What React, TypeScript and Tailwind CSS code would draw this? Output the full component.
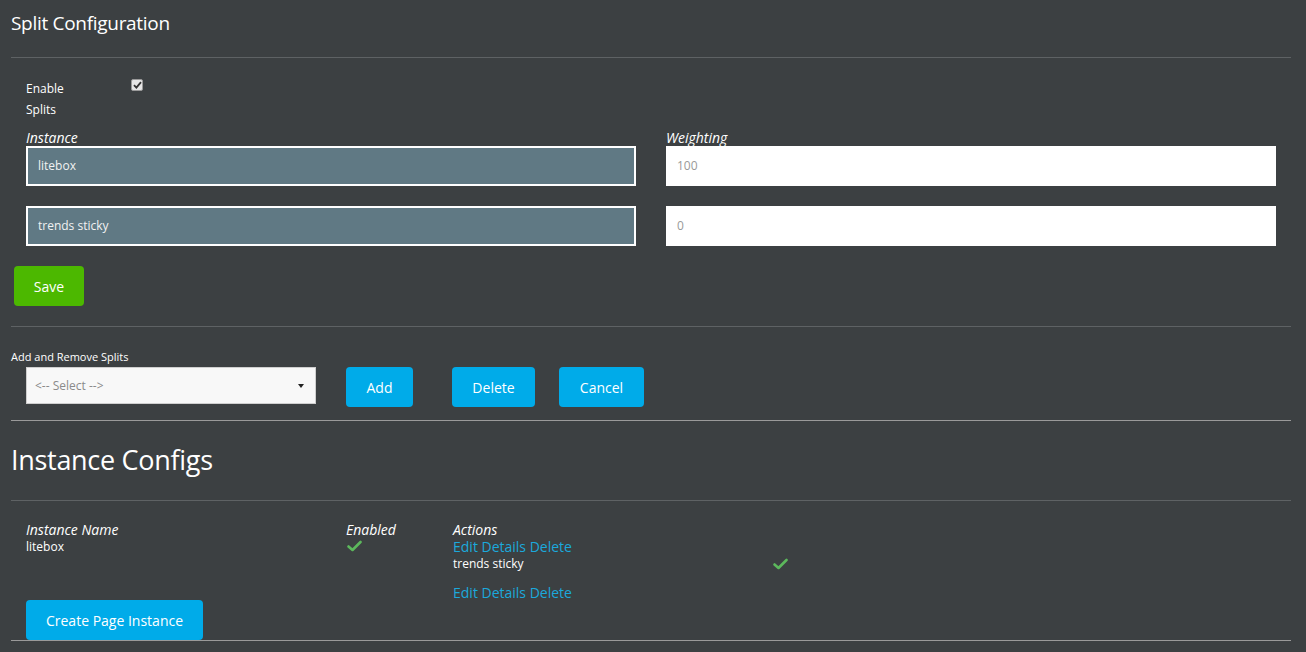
import React from "react";

const font = { fontFamily: '"Open Sans", "Noto Sans", sans-serif' };

function Check({ className = "" }: { className?: string }) {
  return (
    <svg width="15" height="12" viewBox="0 0 15 12" className={className}>
      <path d="M1.5 6.5 L5.5 10 L13.5 2" fill="none" stroke="#5cb85c" strokeWidth="2.6" strokeLinecap="round" strokeLinejoin="round" />
    </svg>
  );
}

export default function App() {
  return (
    <div className="w-[1306px] h-[652px] overflow-hidden bg-[#3c4042] text-white pl-[11px] pr-[15px]" style={font}>
      {/* Title */}
      <div className="h-[58px] border-b border-[#5e6264] pt-[10px]">
        <h1 className="text-[19px] leading-[26px] tracking-[-0.3px]">Split Configuration</h1>
      </div>

      {/* Enable */}
      <div className="flex pl-[15px] pt-[20px]">
        <div className="w-[105px] text-[12px] leading-[21px]">
          Enable
          <br />
          Splits
        </div>
        <div className="pt-[1px]">
          <span className="flex h-[12px] w-[12px] items-center justify-center rounded-[2px] bg-[#e6e6e6] border border-[#9a9a9a]">
            <svg width="9" height="8" viewBox="0 0 9 8">
              <path d="M1 4.2 L3.4 6.6 L8 1.2" fill="none" stroke="#333" strokeWidth="1.8" />
            </svg>
          </span>
        </div>
      </div>

      {/* Instance / Weighting */}
      <div className="grid grid-cols-[610px_610px] gap-x-[30px] gap-y-[20px] pl-[15px] pt-[10px]">
        <div>
          <div className="text-[14px] italic leading-[16px]">Instance</div>
          <div className="h-[40px] border-2 border-white bg-[#607984] px-[10px] text-[12px] leading-[36px] text-[#f2f2f2]">litebox</div>
        </div>
        <div>
          <div className="text-[14px] italic leading-[16px]">Weighting</div>
          <div className="h-[40px] bg-white px-[11px] text-[12px] leading-[40px] text-[#999]">100</div>
        </div>
        <div className="h-[40px] border-2 border-white bg-[#607984] px-[10px] text-[12px] leading-[36px] text-[#f2f2f2]">trends sticky</div>
        <div className="h-[40px] bg-white px-[11px] text-[12px] leading-[40px] text-[#999]">0</div>
      </div>

      {/* Save */}
      <div className="h-[81px] border-b border-[#5e6264] pl-[3px] pt-[20px]">
        <button className="h-[40px] w-[70px] rounded-[4px] bg-[#4cb800] text-[14px] text-white">Save</button>
      </div>

      {/* Add and Remove */}
      <div className="h-[94px] border-b border-[#9a9a9a]">
        <div className="pt-[23px] text-[11px] leading-[14px]">Add and Remove Splits</div>
        <div className="flex items-start pl-[15px] pt-[3px]">
          <div className="flex h-[37px] w-[290px] items-center justify-between border border-[#cfcfcf] bg-[#f8f8f8] pl-[8px] pr-[11px] text-[12px] text-[#8a8a8a]">
            <span>&lt;-- Select --&gt;</span>
            <svg width="6" height="4" viewBox="0 0 6 4">
              <path d="M0 0 H6 L3 4 Z" fill="#222" />
            </svg>
          </div>
          <button className="ml-[30px] h-[40px] w-[67px] rounded-[4px] bg-[#00abe9] text-[14px] text-white">Add</button>
          <button className="ml-[39px] h-[40px] w-[83px] rounded-[4px] bg-[#00abe9] text-[14px] text-white">Delete</button>
          <button className="ml-[24px] h-[40px] w-[85px] rounded-[4px] bg-[#00abe9] text-[14px] text-white">Cancel</button>
        </div>
      </div>

      {/* Instance Configs */}
      <div className="h-[80px] border-b border-[#5e6264] pt-[21px]">
        <h2 className="text-[27px] leading-[36px] tracking-[-0.3px]">Instance Configs</h2>
      </div>

      {/* Table */}
      <div className="h-[140px] border-b border-[#9a9a9a] pl-[15px] pt-[20px]">
        <div className="flex">
          <div className="w-[320px]">
            <div className="text-[14px] italic leading-[18px]">Instance Name</div>
            <div className="text-[12px] leading-[16px]">litebox</div>
          </div>
          <div className="w-[107px]">
            <div className="text-[14px] italic leading-[18px]">Enabled</div>
            <Check className="ml-[1px] mt-[1px]" />
          </div>
          <div>
            <div className="text-[14px] italic leading-[18px]">Actions</div>
            <div className="text-[14px] leading-[16px] text-[#1ba9dc]">Edit Details Delete</div>
            <div className="flex items-center pt-[1px]">
              <span className="w-[320px] text-[12px] leading-[16px]">trends sticky</span>
              <Check />
            </div>
            <div className="pt-[13px] text-[14px] leading-[16px] text-[#1ba9dc]">Edit Details Delete</div>
          </div>
        </div>
        <button className="mt-[-1px] h-[40px] w-[177px] rounded-[4px] bg-[#00abe9] text-[14px] text-white">Create Page Instance</button>
      </div>
    </div>
  );
}
